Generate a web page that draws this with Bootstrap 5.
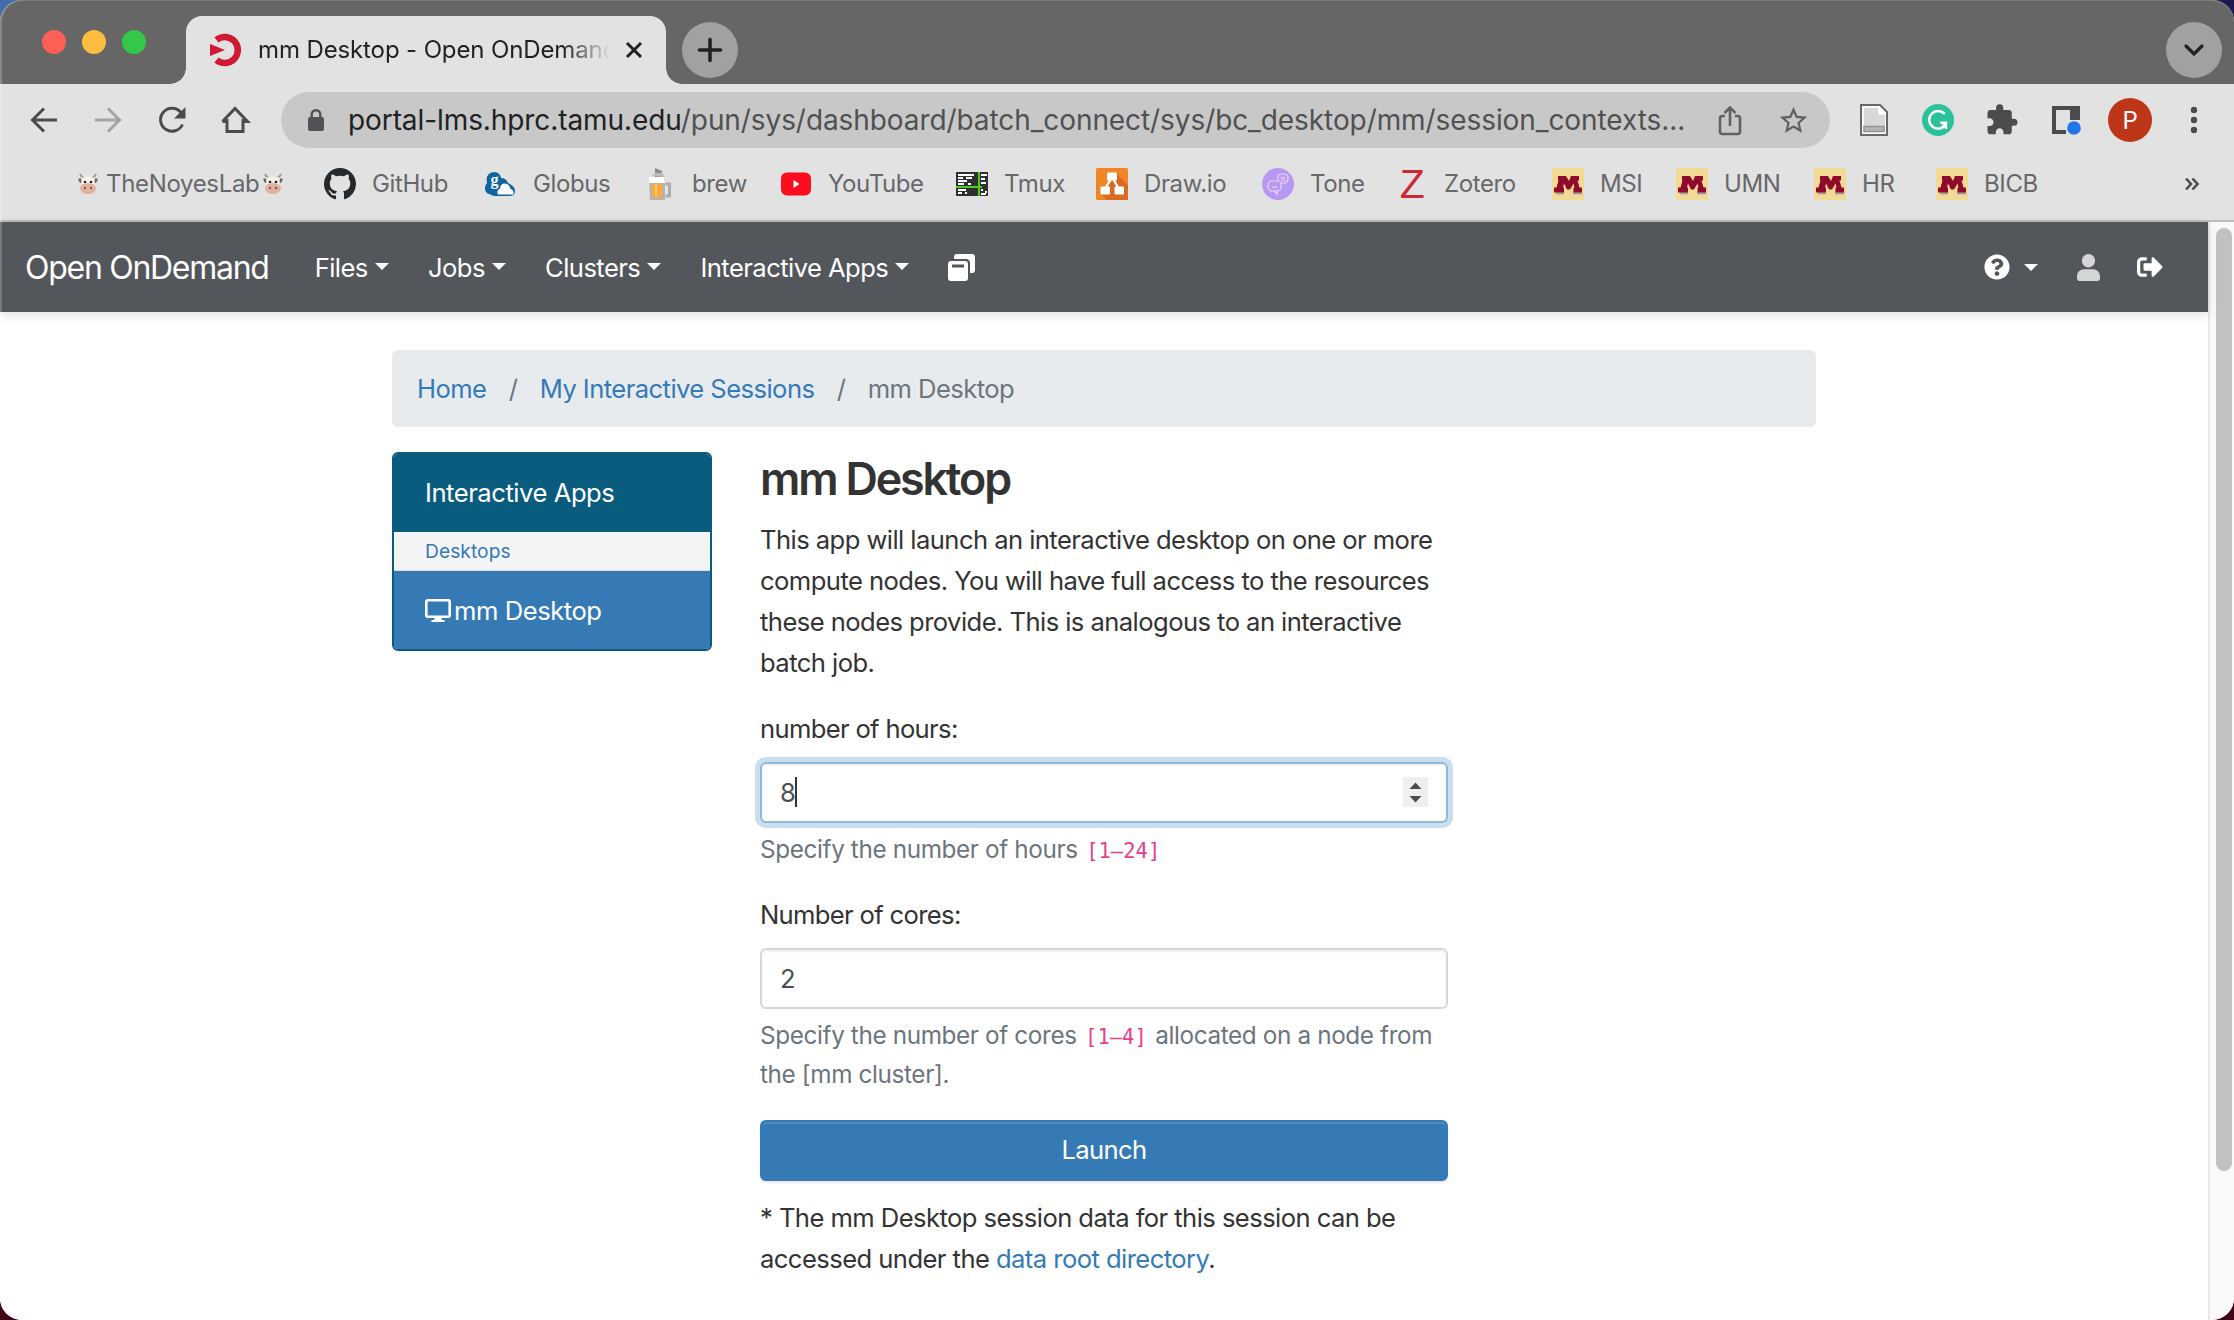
<!DOCTYPE html>
<html lang="en">
<head>
<meta charset="utf-8">
<title>mm Desktop - Open OnDemand</title>
<link href="https://cdn.jsdelivr.net/npm/bootstrap@5.3.0/dist/css/bootstrap.min.css" rel="stylesheet">
<style>
html{font-size:25.6px}
body{font-family:Inter,"Liberation Sans",sans-serif;line-height:41px;letter-spacing:-.022em;color:#333;background:linear-gradient(90deg,#3f6ea8 0 50%,#1c1c4c 50%) top/100% 60px no-repeat,#420518;height:1320px;overflow:hidden}
svg{display:block;flex:none;overflow:visible}
a{color:#337ab7;text-decoration:none}
.window{height:1320px;border-radius:22px;background:#fff;overflow:hidden;position:relative}
.window::after{content:"";position:absolute;inset:0;border-radius:22px;box-shadow:inset 2px 0 0 rgba(255,255,255,.22),inset 0 1px 0 rgba(255,255,255,.15);pointer-events:none}
.titlebar{height:84px;background:#666}
.lights{width:186px;padding-left:42px;gap:16px;height:84px}
.light{width:24px;height:24px;border-radius:50%}
.light-close{background:#fe5f57}
.light-min{background:#febc40}
.light-max{background:#34c84a}
.tab-item{width:480px;height:68px;margin-top:16px;background:#e2e2e2;border-radius:16px 16px 0 0;padding:0 23px 0 24px;position:relative;font-size:24px;letter-spacing:-.005em;color:#202124}
.tab-item::before,.tab-item::after{content:"";position:absolute;bottom:0;width:16px;height:16px}
.tab-item::before{left:-16px;background:radial-gradient(circle at 0 0,transparent 15.5px,#e2e2e2 16px)}
.tab-item::after{right:-16px;background:radial-gradient(circle at 100% 0,transparent 15.5px,#e2e2e2 16px)}
.tab-title{width:352px;margin-left:16px;padding-bottom:1px;overflow:hidden;white-space:nowrap;-webkit-mask:linear-gradient(90deg,#000 305px,transparent 352px);mask:linear-gradient(90deg,#000 305px,transparent 352px)}
.round-btn{width:56px;height:56px;border-radius:50%;background:#a1a1a1;margin-top:22px}
.new-tab{margin-left:16px}
.tab-search{margin-right:12px}
.toolbar{height:72px;background:#e2e2e2;padding-left:28px;color:#4c4c4c}
.tools{gap:32px}
.address{width:1549px;height:56px;border-radius:28px;background:#c8c8c8;margin:0 28px 0 29px;padding:0 20px 0 21px;color:#505153}
.address-text{font-size:28px;letter-spacing:-.003em;white-space:nowrap;width:1368px;margin-left:18px}
.address-text b{font-weight:400;color:#202124}
.avatar{width:44px;height:44px;border-radius:50%;background:#bd3618;color:#fff;font-size:24px;margin:0 -6px}
.bookmarks{height:66px;background:#e2e2e2;border-bottom:2px solid #bdbdbd;padding:0 0 9px 77px;display:grid;grid-template-columns:247px 161px 159px 136px 176px 140px 166px 134px 156px 124px 138px 122px 248px auto;align-items:center;font-size:24px;letter-spacing:-.016em;color:#66686b;white-space:nowrap}
.bookmarks>span{display:flex;align-items:center;gap:16px}
.bookmarks>.lab{gap:7px;letter-spacing:-.014em}
.bookmarks>.lab svg:last-child{margin-left:-4px}
.gopher{width:32px;height:32px;background:#f2da94}
.zee{width:32px;font:400 41px/32px "Liberation Sans",sans-serif;color:#cc2936;text-align:center}
.ood-nav{height:90px;background:#53565a;box-shadow:0 3px 10px rgba(0,0,0,.12);padding:0 0 0 25px;--bs-navbar-color:#fff;position:relative}
.ood-nav .navbar-brand{font-size:32px;letter-spacing:-.04em;color:#fff;margin-right:46px;padding:0}
.ood-nav .navbar-nav{gap:39.3px}
.ood-nav .nav-link{padding-top:0;padding-bottom:0;color:#fff}
.ood-nav .dropdown-toggle::after{margin-left:.27em}
.right-nav{margin-right:45px}
.help-menu{margin-left:7px;padding-top:2px!important}
.user-icon{margin-left:39px}
.exit-icon{margin-left:37px}
.page{width:2208px;height:1098px;background:#fff}
.scroll-track{width:26px;height:1098px;background:#fafafa;border-left:2px solid #e8e8e8;padding:6px 2px 0 6px}
.scroll-thumb{width:16px;height:943px;border-radius:8px;background:#c1c1c1}
.ood-box{max-width:1472px;--bs-gutter-x:48px;padding:38px 24px 0}
.ood-box .row{--bs-gutter-x:48px}
.crumbs{background:#e8ebee;border-radius:6px;padding:18px 25px;margin-bottom:25px;--bs-breadcrumb-item-padding-x:22.3px;--bs-breadcrumb-divider-color:#6c757d;--bs-breadcrumb-item-active-color:#6c757d}
.apps{border:2px solid #0a5c7f;border-radius:6px;overflow:hidden;color:#fff;height:199px}
.apps div{padding-left:31px}
.apps .head{height:78px;line-height:77px;background:#0a5c7f;letter-spacing:-.018em}
.apps .sub{height:39px;line-height:38px;background:#f4f4f4;color:#337ab7;font-size:19.2px;letter-spacing:.003em;border-bottom:1px solid #ddd}
.apps .pick{height:78px;background:#367ab5}
.pick span{margin-left:3px;letter-spacing:-.018em}
.ood-title{font-size:44.8px;line-height:53.8px;font-weight:600;letter-spacing:-.048em;padding-top:1px;margin-bottom:11.8px}
.field-label{margin-bottom:12.8px;display:block;letter-spacing:-.026em}
.field{height:61px;border:2px solid #d3d8de;border-radius:6px;padding:0 18px 0 18px;color:#495057;box-shadow:inset 0 2px 2px rgba(0,0,0,.06);background:#fff;line-height:57px}
.field.active{border-color:#8db9df;box-shadow:inset 0 2px 2px rgba(0,0,0,.06),0 0 0 5px #cbdeed}
.caret-bar{width:2px;height:30px;background:#333;margin-right:auto}
.spin{width:25px;height:30px;background:#efefef}
.help{font-size:24.3px;line-height:38.9px;letter-spacing:-.0155em;color:#6c757d;margin:7px 0 25px}
.help code{font:20.5px "DejaVu Sans Mono",monospace;letter-spacing:0;color:#e83e8c;margin:0 2px}
.launch{height:61px;border-radius:6px;background:#367ab5;border:2px solid #337ab7;color:#fff;font-size:25.6px;letter-spacing:-.025em;padding:1px 0 0;box-shadow:inset 0 2px 0 rgba(255,255,255,.12),0 2px 2px rgba(0,0,0,.08);margin:1px 0 16px}
</style>
<script src="https://cdn.jsdelivr.net/npm/bootstrap@5.3.0/dist/js/bootstrap.bundle.min.js"></script>
</head>
<body>
<svg width="0" height="0" class="position-absolute"><defs>
<symbol id="cow" viewBox="0 0 22 22"><path d="M3 1q1 3 4 4M19 1q-1 3-4 4" stroke="#a99782" stroke-width="2" fill="none"/><path d="M1 6l4-1 1 4-3 1zM21 6l-4-1-1 4 3 1z" fill="#6b625c"/><path d="M4 5q7-3 14 0l-1 10H5z" fill="#f4f1ec"/><circle cx="8" cy="9" r="1.3" fill="#222"/><circle cx="14" cy="9" r="1.3" fill="#222"/><ellipse cx="11" cy="15.5" rx="8" ry="5.500" fill="#e0b29f"/><circle cx="8" cy="15" r="1.2" fill="#8b5a4c"/><circle cx="14" cy="15" r="1.2" fill="#8b5a4c"/></symbol>
<symbol id="blockm" viewBox="0 0 32 32"><path d="M4 23.500h8v3H4zM21 23.500h9v3h-9z" fill="#aaa3a0"/><path d="M6 8h8l3 5 2-5h8v4.500h-1.500l2 7H30v5h-8.500v-5h1l-1-4-3.500 6h-3l-3-6-1 4h1v5H2v-5h2.500l2-7H6z" fill="#8f0a2c"/></symbol>
</defs></svg>
<div class="window">
  <div class="titlebar d-flex">
    <div class="lights d-flex align-items-center"><span class="light light-close"></span><span class="light light-min"></span><span class="light light-max"></span></div>
    <div class="tab-item d-flex align-items-center">
      <svg width="32" height="32" viewBox="0 0 32 32"><path d="M6.500 6A13 13 0 1 1 6.500 26" fill="none" stroke="#cf1a32" stroke-width="6.500"/><path d="M0 10l15 6-15 6z" fill="#cf1a32"/></svg>
      <span class="tab-title">mm Desktop - Open OnDemand</span>
      <svg class="ms-auto" width="18" height="18" viewBox="0 0 18 18" stroke="#202124" stroke-width="3"><path d="M2 2l14 14M16 2L2 16"/></svg>
    </div>
    <div class="round-btn new-tab d-flex align-items-center justify-content-center"><svg width="24" height="24" viewBox="0 0 24 24" stroke="#202124" stroke-width="3.600" stroke-linecap="round"><path d="M12 1.500v21M1.500 12h21"/></svg></div>
    <div class="round-btn tab-search d-flex align-items-center justify-content-center ms-auto"><svg width="20" height="12" viewBox="0 0 20 12" fill="none" stroke="#202124" stroke-width="3.200" stroke-linecap="round"><path d="M2 2l8 8 8-8"/></svg></div>
  </div>
  <div class="toolbar d-flex align-items-center">
    <div class="tools d-flex">
      <svg width="32" height="32" viewBox="0 0 32 32" fill="none" stroke="currentColor" stroke-width="3"><path d="M29 16H5M16 4.500L4.500 16 16 27.500"/></svg>
      <svg width="32" height="32" viewBox="0 0 32 32" fill="none" stroke="#a3a3a3" stroke-width="3"><path d="M3 16h24M16 4.500L27.500 16 16 27.500"/></svg>
      <svg width="32" height="32" viewBox="0 0 32 32"><path d="M26.500 20.500A11.500 11.500 0 1 1 25 8.500" fill="none" stroke="currentColor" stroke-width="3"/><path d="M29.500 3v11.500H18z" fill="currentColor"/></svg>
      <svg width="32" height="32" viewBox="1 0 32 32" fill="none" stroke="currentColor" stroke-width="3"><path d="M8 15v12.500h16V15M3.500 17.500L16 4.500l12.500 13H24M3.500 17.500H8"/></svg>
    </div>
    <div class="address d-flex align-items-center">
      <svg width="28" height="28" viewBox="0 0 28 28"><rect x="6" y="11" width="16" height="14" rx="2" fill="#505257"/><path d="M9.700 12V8.500a4.300 4.300 0 0 1 8.600 0V12" fill="none" stroke="#505257" stroke-width="2.400"/></svg>
      <span class="address-text"><b>portal-lms.hprc.tamu.edu</b>/pun/sys/dashboard/batch_connect/sys/bc_desktop/mm/session_contexts...</span>
      <svg width="28" height="32" viewBox="0 0 28 32" fill="none" stroke="#606163" stroke-width="2.600"><path d="M9 12H6.500A2.500 2.500 0 0 0 4 14.500v13A2.500 2.500 0 0 0 6.500 30h15a2.500 2.500 0 0 0 2.500-2.500v-13a2.500 2.500 0 0 0-2.500-2.500H19M14 22V4M8.500 9L14 3.500 19.500 9"/></svg>
      <svg class="ms-auto" width="33" height="33" viewBox="0 0 24 24" fill="#606163"><path d="M22 9.240l-7.190-.62L12 2 9.190 8.630 2 9.240l5.460 4.730L5.820 21 12 17.270 18.180 21l-1.630-7.030L22 9.240zM12 15.400l-3.760 2.270 1-4.280-3.320-2.880 4.380-.38L12 6.100l1.710 4.040 4.380.38-3.320 2.880 1 4.280L12 15.400z"/></svg>
    </div>
    <div class="tools d-flex align-items-center">
      <svg width="32" height="32" viewBox="0 0 32 32"><path d="M3 1h19l7 7v23H3z" fill="#f8f8f8" stroke="#68696b" stroke-width="2"/><path d="M6 4h14v7h7v15H6z" fill="#d8d8d8"/><path d="M21 2v7h7" fill="#fff" stroke="#fff"/><path d="M6 22.500h20v5H6z" fill="#b5b5b5" stroke="#929292" stroke-width="1.500"/></svg>
      <svg width="32" height="32" viewBox="0 0 32 32"><circle cx="16" cy="16" r="16" fill="#2bc19b"/><path d="M22.700 10A8.800 8.800 0 1 0 23.500 20.500M18 18.800h6V25M24 19l-3.500 3.500" fill="none" stroke="#fff" stroke-width="2.400"/></svg>
      <svg width="32" height="32" viewBox="1 0 24 24" fill="currentColor"><path d="M20.500 11H19V7c0-1.100-.9-2-2-2h-4V3.500a2.500 2.500 0 0 0-5 0V5H4c-1.100 0-1.990.9-1.990 2v3.800H3.500c1.490 0 2.700 1.210 2.700 2.700s-1.210 2.700-2.700 2.700H2V20c0 1.100.9 2 2 2h3.800v-1.500c0-1.490 1.210-2.700 2.700-2.700s2.700 1.210 2.700 2.700V22H17c1.100 0 2-.9 2-2v-4h1.500a2.500 2.500 0 0 0 0-5z" transform="translate(0 -.8) scale(1.070)"/></svg>
      <svg width="32" height="32" viewBox="0 0 32 32"><path d="M2 2h28v14H20V6H6v20h10v4H2z" fill="#4c4c4c"/><circle cx="24" cy="24" r="8" fill="#e2e2e2"/><circle cx="24" cy="24" r="6.800" fill="#2376e8"/></svg>
      <span class="avatar d-flex align-items-center justify-content-center">P</span>
      <svg width="32" height="32" viewBox="0 0 32 32" fill="currentColor"><circle cx="16" cy="6" r="3.200"/><circle cx="16" cy="16" r="3.200"/><circle cx="16" cy="26" r="3.200"/></svg>
    </div>
  </div>
  <div class="bookmarks">
    <span class="lab"><svg width="22" height="22"><use href="#cow"/></svg><span>TheNoyesLab</span><svg width="22" height="22"><use href="#cow"/></svg></span>
    <span><svg width="32" height="32" viewBox="0 0 16 16" fill="#24292e"><path d="M8 0C3.580 0 0 3.580 0 8c0 3.540 2.290 6.530 5.470 7.590.4.070.55-.17.55-.38 0-.19-.01-.82-.01-1.490-2.010.37-2.530-.49-2.690-.94-.09-.23-.48-.94-.82-1.130-.28-.15-.68-.52-.01-.53.63-.01 1.080.58 1.230.82.72 1.210 1.870.87 2.330.66.070-.52.28-.87.51-1.070-1.780-.2-3.640-.89-3.640-3.950 0-.87.31-1.590.82-2.150-.08-.2-.36-1.020.08-2.120 0 0 .67-.21 2.200.82.64-.18 1.320-.27 2-.27s1.360.09 2 .27c1.530-1.040 2.200-.82 2.200-.82.44 1.100.16 1.920.08 2.120.51.56.82 1.270.82 2.150 0 3.070-1.870 3.750-3.650 3.950.29.25.54.73.54 1.480 0 1.070-.01 1.930-.01 2.200 0 .21.15.46.55.38A8.010 8.010 0 0 0 16 8c0-4.420-3.580-8-8-8z"/></svg>GitHub</span>
    <span><svg width="32" height="32" viewBox="1 0 32 32"><path d="M5 26a6 6 0 0 1-4-6q0-3 2-5-2-10 7-11 6 0 7 6 5 0 7 5 7 3 7 8 0 5-6 5H10z" fill="#0f659f"/><path d="M14 26.500q-2-4 2-6 1-7 8-4 2 2 2 4 5 2 3 6z" fill="#fff"/><text x="6.500" y="17" font-family="Liberation Serif" font-weight="700" font-size="16" fill="#fff">g</text></svg>Globus</span>
    <span><svg width="32" height="32" viewBox="0 0 32 32"><path d="M11 0l7 3v6h-7z" fill="#8c8c8c"/><path d="M8 8l3-3h7l3 4z" fill="#bbb"/><path d="M21.500 16h4v12h-4" fill="none" stroke="#adadad" stroke-width="3"/><path d="M5 11h16v21H6z" fill="#b9b3a9"/><path d="M5 9h15l1 6H5z" fill="#fff"/><path d="M8 16h10v13H8z" fill="#faaa3c"/><path d="M11 16h2v13h-2z" fill="#ffc678"/></svg>brew</span>
    <span><svg width="32" height="32" viewBox="0 0 32 32"><rect x="1" y="4.500" width="30" height="23" rx="6" fill="#fc0d1b"/><path d="M13.500 12l6 4-6 4z" fill="#fff"/></svg>YouTube</span>
    <span><svg width="32" height="32" viewBox="0 0 32 32"><path d="M0 4h32v24H0z" fill="#303030"/><path d="M2 7h16M2 10h5m3 0h6M2 13h9M2 16h6m4 0h3M2 22h8M2 25h4m3 0h2M25 7h6M25 11h4M25 15h5M25 22h2m2 2h2M25 26h5" stroke="#fff" stroke-width="2"/><path d="M23 4v24M0 19h26" stroke="#4cce22" stroke-width="2"/></svg>Tmux</span>
    <span><svg width="32" height="32" viewBox="0 0 32 32"><rect width="32" height="32" rx="1.500" fill="#ef8626"/><path d="M20 5l12 12v15H11l-6-6 12-14z" fill="#dc6b22"/><path d="M16 9l-7 12M16 9l7 12" stroke="#fff" stroke-width="2.300"/><rect x="11" y="4.500" width="10" height="8" rx="1" fill="#fff"/><rect x="4.500" y="18.500" width="9.500" height="8" rx="1" fill="#fff"/><rect x="18.500" y="18.500" width="9.500" height="8" rx="1" fill="#fff"/></svg>Draw.io</span>
    <span><svg width="32" height="32" viewBox="0 0 32 32"><circle cx="16" cy="16" r="16" fill="#b898f0"/><g fill="none" stroke="#e5d8fb" stroke-width="1.200"><rect x="6" y="13" width="13" height="10" rx="4"/><path d="M12 23l3 3v-3M10 18q2 3 5 0M16 12V9q0-3 3-3h3q4 0 4 4 0 5-4 5h-3M19 9l4 4m0-4l-4 4"/></g></svg>Tone</span>
    <span><span class="zee">Z</span>Zotero</span>
    <span><svg class="gopher"><use href="#blockm"/></svg>MSI</span>
    <span><svg class="gopher"><use href="#blockm"/></svg>UMN</span>
    <span><svg class="gopher"><use href="#blockm"/></svg>HR</span>
    <span><svg class="gopher"><use href="#blockm"/></svg>BICB</span>
    <span><svg width="16" height="14" viewBox="0 0 16 14" fill="none" stroke="#4c4c4c" stroke-width="2.600"><path d="M2 1.500L7 7l-5 5.500M8.500 1.500l5 5.500-5 5.500"/></svg></span>
  </div>
  <div class="d-flex">
    <div class="page">
      <nav class="ood-nav navbar navbar-expand d-flex justify-content-start">
        <a class="navbar-brand" href="#">Open OnDemand</a>
        <div class="navbar-nav align-items-center">
          <a class="nav-link dropdown-toggle px-0" href="#">Files</a>
          <a class="nav-link dropdown-toggle px-0" href="#">Jobs</a>
          <a class="nav-link dropdown-toggle px-0" href="#">Clusters</a>
          <a class="nav-link dropdown-toggle px-0" href="#">Interactive Apps</a>
          <a class="nav-link px-0" href="#"><svg width="27" height="27" viewBox="0 0 27 27" fill="#fff"><path d="M9 0h15q3 0 3 3v13q0 3-3 3h-2V9q0-3-3-4H6V3q0-3 3-3z"/><path fill-rule="evenodd" d="M3 7h14q3 0 3 3v14q0 3-3 3H3q-3 0-3-3V10q0-3 3-3zm1 3.500v3h12v-3z"/></svg></a>
        </div>
        <div class="right-nav d-flex align-items-center ms-auto">
          <svg width="26" height="26" viewBox="0 0 512 512" fill="#fff"><path d="M504 256c0 136.997-111.043 248-248 248S8 392.997 8 256C8 119.083 119.043 8 256 8s248 111.083 248 248zM262.655 90c-54.497 0-89.255 22.957-116.549 63.758-3.536 5.286-2.353 12.415 2.715 16.258l34.699 26.310c5.205 3.947 12.621 3.008 16.665-2.122 17.864-22.658 30.113-35.797 57.303-35.797 20.429 0 45.698 13.148 45.698 32.958 0 14.976-12.363 22.667-32.534 33.976C247.128 238.528 216 254.941 216 296v4c0 6.627 5.373 12 12 12h56c6.627 0 12-5.373 12-12v-1.333c0-28.462 83.186-29.647 83.186-106.667 0-58.002-60.165-102-116.531-102zM256 338c-25.365 0-46 20.635-46 46 0 25.364 20.635 46 46 46s46-20.636 46-46c0-25.365-20.635-46-46-46z"/></svg>
          <a class="nav-link dropdown-toggle help-menu" href="#"></a>
          <svg class="user-icon" width="23" height="27" viewBox="0 0 448 512" preserveAspectRatio="none" fill="#d4d5d6"><path d="M224 256c70.700 0 128-57.300 128-128S294.700 0 224 0 96 57.300 96 128s57.300 128 128 128zm89.600 32h-179.200C60.200 288 0 348.200 0 422.400V464c0 26.500 21.500 48 48 48h352c26.500 0 48-21.500 48-48v-41.600c0-74.200-60.200-134.400-134.400-134.400z"/></svg>
          <svg class="exit-icon" width="26" height="26" viewBox="0 0 512 512" fill="#fff"><path d="M497 273L329 441c-15 15-41 4.500-41-17v-96H152c-13.300 0-24-10.700-24-24v-96c0-13.300 10.700-24 24-24h136V88c0-21.400 25.900-32 41-17l168 168c9.300 9.400 9.300 24.600 0 34zM192 436v-40c0-6.600-5.400-12-12-12H96c-17.700 0-32-14.300-32-32V160c0-17.700 14.300-32 32-32h84c6.600 0 12-5.400 12-12V76c0-6.600-5.400-12-12-12H96c-53 0-96 43-96 96v192c0 53 43 96 96 96h84c6.600 0 12-5.400 12-12z"/></svg>
        </div>
      </nav>
      <div class="ood-box container-fluid">
        <ol class="crumbs breadcrumb">
          <li class="breadcrumb-item"><a href="#">Home</a></li>
          <li class="breadcrumb-item"><a href="#">My Interactive Sessions</a></li>
          <li class="breadcrumb-item active">mm Desktop</li>
        </ol>
        <div class="row">
          <div class="col-3">
            <div class="apps">
              <div class="head">Interactive Apps</div>
              <div class="sub">Desktops</div>
              <div class="pick d-flex align-items-center"><svg width="26" height="23" viewBox="0 0 26 23"><rect x="1.300" y="1.300" width="23.400" height="16.400" rx="1.500" fill="none" stroke="#fff" stroke-width="2.600"/><path d="M10 18h6l1 3h2.500v2h-13v-2H9z" fill="#fff"/></svg><span>mm Desktop</span></div>
            </div>
          </div>
          <div class="col-6">
            <h3 class="ood-title">mm Desktop</h3>
            <p>This app will launch an interactive desktop on one or more compute nodes. You will have full access to the resources these nodes provide. This is analogous to an interactive batch job.</p>
            <label class="field-label">number of hours:</label>
            <div class="field active d-flex align-items-center">8<span class="caret-bar"></span><svg class="spin" viewBox="0 0 25 30" fill="#4c4c4c"><path d="M6.500 12l6-6.500 6 6.500zM6.500 19l6 6.500 6-6.500z"/></svg></div>
            <div class="help">Specify the number of hours <code>[1–24]</code></div>
            <label class="field-label">Number of cores:</label>
            <div class="field">2</div>
            <div class="help">Specify the number of cores <code>[1–4]</code> allocated on a node from the [mm cluster].</div>
            <button class="launch btn w-100">Launch</button>
            <p class="mb-0">* The mm Desktop session data for this session can be accessed under the <a href="#">data root directory</a>.</p>
          </div>
        </div>
      </div>
    </div>
    <div class="scroll-track"><div class="scroll-thumb"></div></div>
  </div>
</div>
</body>
</html>
